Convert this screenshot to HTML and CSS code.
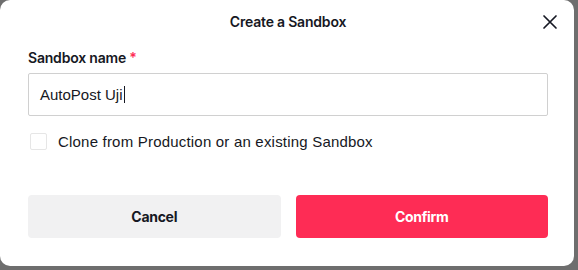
FILE: index.html
```html
<!DOCTYPE html>
<html lang="en">
<head>
    <meta charset="UTF-8">
    <meta name="viewport" content="width=device-width, initial-scale=1.0">
    <title>Create a Sandbox</title>
    <link rel="stylesheet" href="styles.css">
</head>
<body>
    <div class="modal">
        <div class="modal-header">
            <h1>Create a Sandbox</h1>
            <button class="close-btn" aria-label="Close">
                <svg width="16" height="16" viewBox="0 0 16 16">
                    <path d="M2 2 L14 14 M14 2 L2 14" stroke="#161823" stroke-width="1.7" stroke-linecap="round"/>
                </svg>
            </button>
        </div>
        <div class="modal-body">
            <label class="field-label" for="sandbox-name">Sandbox name <span class="required">*</span></label>
            <div class="text-input">
                <span class="value">AutoPost Uji</span><span class="caret"></span>
            </div>
            <label class="check-row">
                <span class="checkbox"></span>
                <span class="check-text">Clone from Production or an existing Sandbox</span>
            </label>
        </div>
        <div class="modal-footer">
            <button class="btn btn-cancel">Cancel</button>
            <button class="btn btn-confirm">Confirm</button>
        </div>
    </div>
</body>
</html>
```

FILE: styles.css
```css
* {
    margin: 0;
    padding: 0;
    box-sizing: border-box;
}

body {
    width: 578px;
    height: 270px;
    background: #6e6e6e;
    font-family: 'Inter', 'Liberation Sans', sans-serif;
    color: #161823;
    overflow: hidden;
}

.modal {
    width: 574px;
    height: 266px;
    background: #fff;
    border-radius: 10px;
    display: flex;
    flex-direction: column;
    padding: 0 26px 0 28px;
}

.modal-header {
    height: 42px;
    display: flex;
    align-items: center;
    justify-content: center;
    position: relative;
}

h1 {
    font-size: 14px;
    font-weight: 600;
    letter-spacing: -0.2px;
    padding-top: 1px;
}

.close-btn {
    position: absolute;
    right: -10px;
    top: 14px;
    width: 16px;
    height: 16px;
    border: none;
    background: none;
    cursor: pointer;
    display: flex;
}

.modal-body {
    display: flex;
    flex-direction: column;
}

.field-label {
    font-size: 14px;
    font-weight: 600;
    letter-spacing: -0.2px;
    line-height: 16px;
    margin-top: 8px;
    margin-bottom: 7px;
}

.required {
    color: #fe2c55;
}

.text-input {
    height: 43px;
    border: 1px solid #d0d0d0;
    border-radius: 2px;
    display: flex;
    align-items: center;
    padding: 0 11px;
    font-family: 'Liberation Sans', Arial, sans-serif;
    font-size: 15px;
}

.caret {
    width: 1px;
    height: 17px;
    background: #161823;
    margin-left: 1px;
}

.check-row {
    display: flex;
    align-items: center;
    margin-top: 17px;
    gap: 11px;
    font-family: 'Liberation Sans', Arial, sans-serif;
    font-size: 15px;
    letter-spacing: 0.2px;
}

.checkbox {
    width: 17px;
    height: 17px;
    border: 1px solid #e6e6e6;
    border-radius: 2px;
    margin-left: 2px;
}

.modal-footer {
    display: flex;
    gap: 15px;
    margin-top: 45px;
}

.btn {
    flex: 1;
    height: 43px;
    border: none;
    border-radius: 4px;
    font-family: 'Inter', 'Liberation Sans', sans-serif;
    font-size: 14px;
    font-weight: 700;
    letter-spacing: -0.3px;
    cursor: pointer;
}

.btn-cancel {
    background: #f1f1f2;
    color: #161823;
}

.btn-confirm {
    background: #fe2c55;
    color: #fff;
}
```
